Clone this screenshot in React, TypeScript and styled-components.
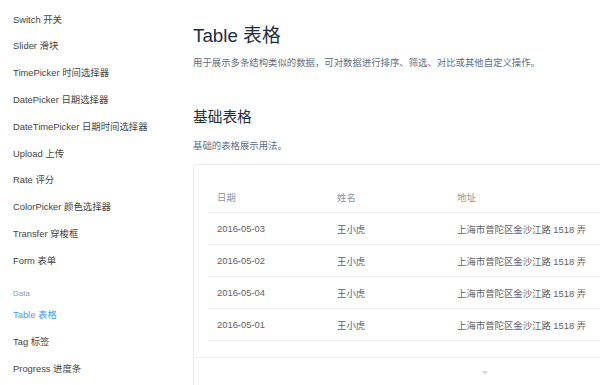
import React from "react";
import styled, { createGlobalStyle } from "styled-components";

type NavItem = { label: string; active?: boolean };

const COMPONENTS: NavItem[] = [
  { label: "Switch 开关" },
  { label: "Slider 滑块" },
  { label: "TimePicker 时间选择器" },
  { label: "DatePicker 日期选择器" },
  { label: "DateTimePicker 日期时间选择器" },
  { label: "Upload 上传" },
  { label: "Rate 评分" },
  { label: "ColorPicker 颜色选择器" },
  { label: "Transfer 穿梭框" },
  { label: "Form 表单" },
];

const DATA_ITEMS: NavItem[] = [
  { label: "Table 表格", active: true },
  { label: "Tag 标签" },
  { label: "Progress 进度条" },
];

const ROWS = [
  { date: "2016-05-03", name: "王小虎", address: "上海市普陀区金沙江路 1518 弄" },
  { date: "2016-05-02", name: "王小虎", address: "上海市普陀区金沙江路 1518 弄" },
  { date: "2016-05-04", name: "王小虎", address: "上海市普陀区金沙江路 1518 弄" },
  { date: "2016-05-01", name: "王小虎", address: "上海市普陀区金沙江路 1518 弄" },
];

const GlobalStyle = createGlobalStyle`
  html, body {
    margin: 0;
    padding: 0;
    background: #fff;
    overflow: hidden;
  }
  body {
    font-family: "Liberation Sans", "Noto Sans CJK SC", sans-serif;
  }
`;

const Page = styled.div`
  display: flex;
  width: 600px;
  height: 385px;
  overflow: hidden;
`;

const Sidebar = styled.nav`
  flex: 0 0 193px;
  padding: 6.6px 0 0 13px;
  box-sizing: border-box;
`;

const NavLink = styled.div<{ $active?: boolean }>`
  font-size: 9.4px;
  line-height: 26.8px;
  color: ${(p) => (p.$active ? "#409eff" : "#444")};
  white-space: nowrap;
`;

const GroupTitle = styled.div`
  margin-top: 10px;
  font-size: 8px;
  line-height: 17.4px;
  color: #999;
`;

const Main = styled.main`
  flex: 0 0 584px;
  padding-top: 25px;
`;

const Title = styled.h2`
  margin: 0;
  font-size: 18.8px;
  line-height: 22px;
  font-weight: 400;
  color: #1f2f3d;
`;

const Lead = styled.p<{ $gap: number }>`
  margin: ${(p) => p.$gap}px 0 0;
  font-size: 9.4px;
  line-height: 14px;
  color: #5e6d82;
`;

const SectionTitle = styled.h3`
  margin: 37px 0 0;
  font-size: 14.7px;
  line-height: 20px;
  font-weight: 400;
  color: #1f2f3d;
`;

const DemoCard = styled.div`
  margin-top: 11px;
  border: 1px solid #ebebeb;
  border-radius: 3px;
`;

const DemoBody = styled.div`
  padding: 16px 14px 16px;
`;

const Table = styled.div`
  display: flex;
  flex-direction: column;
  font-size: 9.4px;
`;

const Row = styled.div<{ $head?: boolean }>`
  display: grid;
  grid-template-columns: 120px 120px 1fr;
  height: 31px;
  border-bottom: 1px solid #ebeef5;
  align-items: center;
  color: ${(p) => (p.$head ? "#909399" : "#606266")};
`;

const Cell = styled.div`
  padding-left: 9px;
  white-space: nowrap;
`;

const Control = styled.div`
  height: 29px;
  border-top: 1px solid #eaeefb;
  display: flex;
  align-items: center;
  justify-content: center;
`;

const App: React.FC = () => (
  <>
    <GlobalStyle />
    <Page>
      <Sidebar>
        {COMPONENTS.map((item) => (
          <NavLink key={item.label}>{item.label}</NavLink>
        ))}
        <GroupTitle>Data</GroupTitle>
        {DATA_ITEMS.map((item) => (
          <NavLink key={item.label} $active={item.active}>
            {item.label}
          </NavLink>
        ))}
      </Sidebar>
      <Main>
        <Title>Table 表格</Title>
        <Lead $gap={9}>
          用于展示多条结构类似的数据，可对数据进行排序、筛选、对比或其他自定义操作。
        </Lead>
        <SectionTitle>基础表格</SectionTitle>
        <Lead $gap={12}>基础的表格展示用法。</Lead>
        <DemoCard>
          <DemoBody>
            <Table>
              <Row $head>
                <Cell>日期</Cell>
                <Cell>姓名</Cell>
                <Cell>地址</Cell>
              </Row>
              {ROWS.map((row) => (
                <Row key={row.date}>
                  <Cell>{row.date}</Cell>
                  <Cell>{row.name}</Cell>
                  <Cell>{row.address}</Cell>
                </Row>
              ))}
            </Table>
          </DemoBody>
          <Control>
            <svg width="6" height="4" viewBox="0 0 6 4">
              <path d="M0 0h6L3 4z" fill="#d3dce6" />
            </svg>
          </Control>
        </DemoCard>
      </Main>
    </Page>
  </>
);

export default App;
